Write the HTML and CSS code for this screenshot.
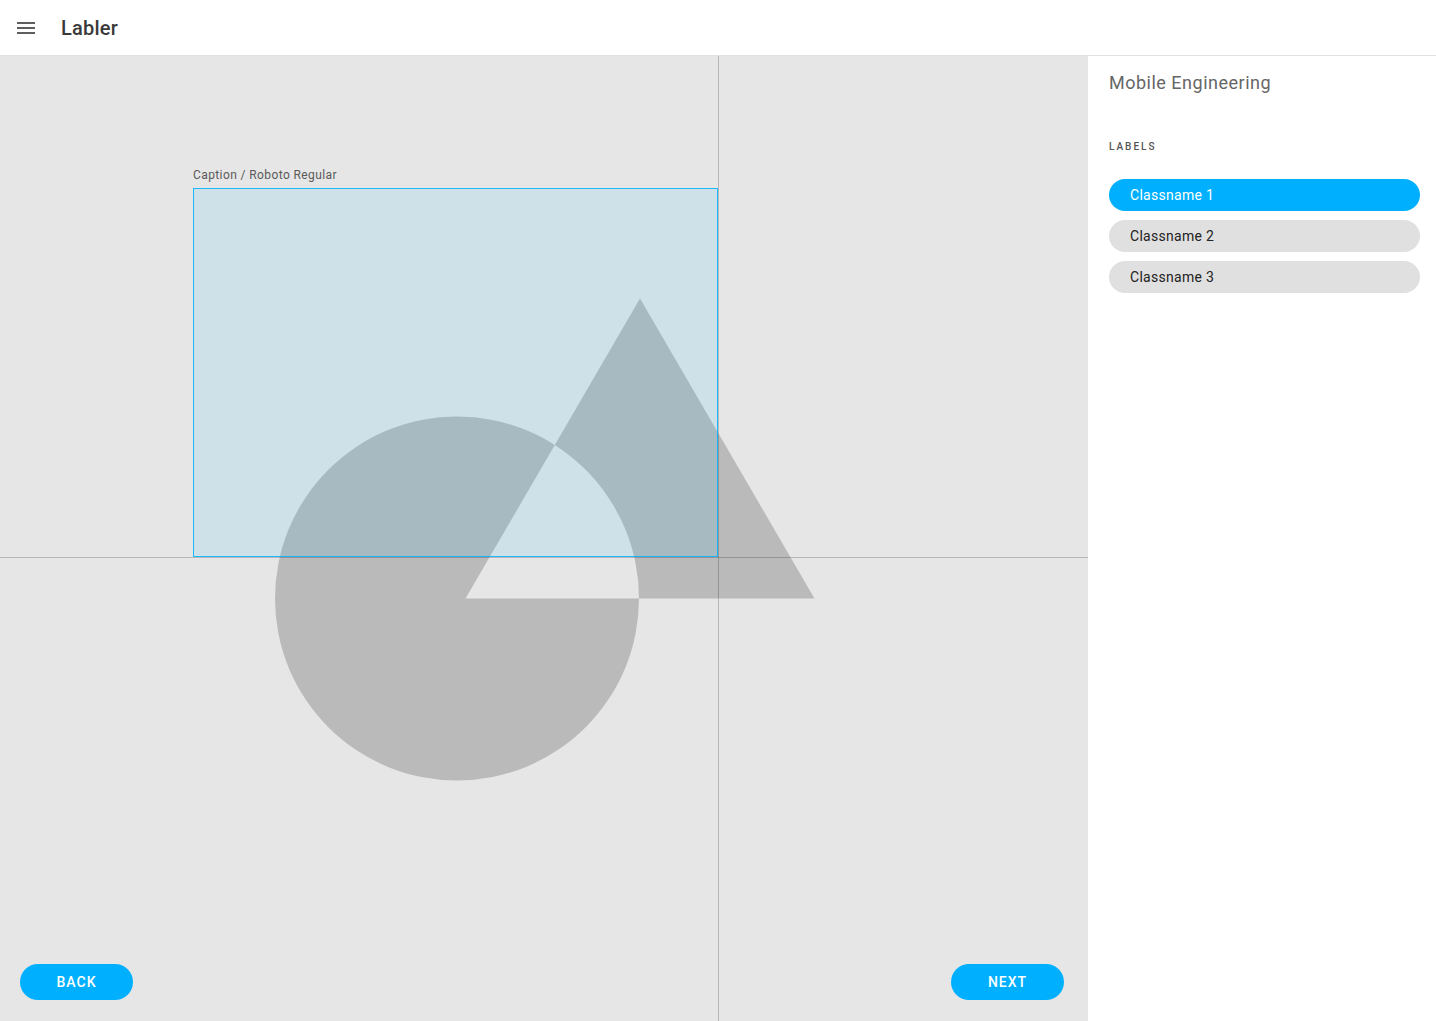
FILE: index.html
```html
<!DOCTYPE html>
<html>
<head>
<meta charset="utf-8">
<title>Labler</title>
<link rel="stylesheet" href="styles.css">
</head>
<body>
<header class="topbar">
  <svg class="menu-icon" width="24" height="24" viewBox="0 0 24 24"><path d="M3 18h18v-2H3v2zm0-5h18v-2H3v2zm0-7v2h18V6H3z" fill="#5f5f5f"/></svg>
  <h1 class="app-title">Labler</h1>
</header>
<div class="main">
  <section class="canvas">
    <svg class="stage" width="1088" height="965" viewBox="0 0 1088 965">
      <path fill="#bababa" fill-rule="evenodd" d="M275 542.5a182 182 0 1 0 364 0a182 182 0 1 0 -364 0Z M640 242.5 L814.5 542.5 L465.5 542.5 Z"/>
    </svg>
    <div class="annotation">
      <div class="caption">Caption / Roboto Regular</div>
      <div class="bbox"></div>
    </div>
    <div class="cross-v"></div>
    <div class="cross-h"></div>
    <div class="footer">
      <button class="pill-btn">BACK</button>
      <button class="pill-btn">NEXT</button>
    </div>
  </section>
  <aside class="sidebar">
    <h2 class="project">Mobile Engineering</h2>
    <div class="section-label">LABELS</div>
    <ul class="labels">
      <li class="label active">Classname 1</li>
      <li class="label">Classname 2</li>
      <li class="label">Classname 3</li>
    </ul>
  </aside>
</div>
</body>
</html>
```

FILE: styles.css
```css
* { box-sizing: border-box; }
html, body { margin: 0; padding: 0; height: 100%; }
body {
  font-family: Roboto, "Noto Sans", Arial, sans-serif;
  background: #fff;
  overflow: hidden;
}
.topbar {
  height: 56px;
  display: flex;
  align-items: center;
  padding-left: 14px;
  border-bottom: 1px solid #e2e2e2;
  background: #fff;
}
.menu-icon { display: block; flex: none; }
.app-title {
  margin: 0 0 0 23px;
  font-size: 20px;
  font-weight: 500;
  color: #3a3a3a;
  letter-spacing: 0.2px;
}
.main {
  display: flex;
  height: 965px;
}
.canvas {
  position: relative;
  width: 1088px;
  flex: none;
  background: #e6e6e6;
  display: flex;
  flex-direction: column;
  justify-content: flex-end;
  overflow: hidden;
}
.stage {
  position: absolute;
  left: 0;
  top: 0;
}
.annotation {
  position: absolute;
  left: 193px;
  top: 110px;
}
.caption {
  font-size: 12px;
  line-height: 18px;
  height: 22px;
  color: #5a5a5a;
  letter-spacing: 0.4px;
}
.bbox {
  width: 525px;
  height: 369px;
  background: rgba(0, 176, 255, 0.1);
  border: 1px solid rgba(0, 176, 255, 0.85);
}
.cross-v {
  position: absolute;
  left: 718px;
  top: 0;
  bottom: 0;
  width: 1px;
  background: rgba(0, 0, 0, 0.2);
}
.cross-h {
  position: absolute;
  left: 0;
  right: 0;
  top: 501px;
  height: 1px;
  background: rgba(0, 0, 0, 0.2);
}
.footer {
  position: relative;
  display: flex;
  justify-content: space-between;
  padding: 0 24px 21px 20px;
}
.pill-btn {
  width: 113px;
  height: 36px;
  border: none;
  border-radius: 18px;
  background: #00b0ff;
  color: #fff;
  font-family: Roboto, Arial, sans-serif;
  font-size: 14px;
  font-weight: 500;
  letter-spacing: 1px;
  padding: 0;
}
.sidebar {
  flex: 1;
  background: #fff;
  padding: 0 16px 0 21px;
}
.project {
  margin: 15px 0 0 0;
  font-size: 18px;
  font-weight: 400;
  line-height: 24px;
  color: #666;
  letter-spacing: 0.5px;
}
.section-label {
  margin-top: 45px;
  font-size: 10px;
  line-height: 14px;
  letter-spacing: 2px;
  color: #555;
  font-weight: 500;
}
.labels {
  list-style: none;
  margin: 25px 0 0 0;
  padding: 0;
  display: flex;
  flex-direction: column;
  gap: 9px;
}
.label {
  height: 32px;
  border-radius: 16px;
  background: #e0e0e0;
  color: #222;
  font-size: 14px;
  line-height: 32px;
  padding-left: 21px;
  letter-spacing: 0.3px;
}
.label.active {
  background: #00b0ff;
  color: #fff;
}
```
